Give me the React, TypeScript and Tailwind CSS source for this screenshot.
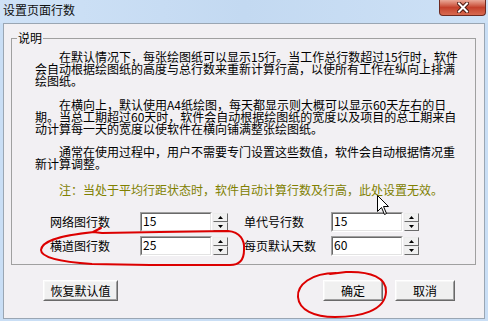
import React from "react";

const FACE = "bg-[#f2f0f3]";

function Spin() {
  return (
    <div className="ml-[1px] flex h-[18px] w-[15px] flex-col">
      <div className="flex h-[9px] items-center justify-center border border-t-[#ececec] border-l-[#ececec] border-b-[#6a6a6a] border-r-[#6a6a6a] bg-[#f0f0f0]">
        <svg width="5" height="3" viewBox="0 0 5 3">
          <path d="M2.5 0 L5 3 L0 3 Z" fill="#000" />
        </svg>
      </div>
      <div className="flex h-[9px] items-center justify-center border border-t-[#ececec] border-l-[#ececec] border-b-[#6a6a6a] border-r-[#6a6a6a] bg-[#f0f0f0]">
        <svg width="5" height="3" viewBox="0 0 5 3">
          <path d="M0 0 L5 0 L2.5 3 Z" fill="#000" />
        </svg>
      </div>
    </div>
  );
}

function Field({ value }: { value: string }) {
  return (
    <div className="flex items-center">
      <div className="h-[20px] w-[72px] border border-t-[#a0a0a0] border-l-[#a0a0a0] border-b-white border-r-white">
        <div className="h-full w-full border border-t-[#696969] border-l-[#696969] border-b-[#e3e3e3] border-r-[#e3e3e3] bg-white pl-[1px] text-[12px] leading-[14px]">
          {value}
        </div>
      </div>
      <Spin />
    </div>
  );
}

function Btn({ label, w }: { label: string; w: string }) {
  return (
    <div className={`h-[21px] ${w} border border-t-white border-l-white border-b-[#696969] border-r-[#696969]`}>
      <div className="flex h-full w-full items-center justify-center border border-t-[#f7f7f7] border-l-[#f7f7f7] border-b-[#a0a0a0] border-r-[#a0a0a0] bg-[#f0f0f0] text-[12px] leading-[12px]">
        {label}
      </div>
    </div>
  );
}

export default function App() {
  return (
    <div className="relative h-[321px] w-[488px] overflow-hidden bg-[#c9def5] font-['Noto_Sans_CJK_SC',sans-serif] text-[12px] leading-[12px] text-black">
      {/* title bar */}
      <div className="flex h-[23px] items-start justify-between bg-gradient-to-r from-[#cfe2f7] via-[#c3d9f1] to-[#cde1f6]">
        <span className="pl-[3px] pt-[4px] text-[12px] leading-[12px] text-[#101010]">设置页面行数</span>
        <div className="mr-[2px] flex h-[16px] w-[47px] items-center justify-center rounded-b-[4px] border border-t-0 border-[#6e2a20] bg-gradient-to-b from-[#e9a898] via-[#c4412c] to-[#d86a50]">
          <svg width="12" height="11" viewBox="0 0 12 11">
            <path d="M2 1.5 L10 9.5 M10 1.5 L2 9.5" stroke="#4a1810" strokeWidth="4" strokeLinecap="square" />
            <path d="M2 1.5 L10 9.5 M10 1.5 L2 9.5" stroke="#ffffff" strokeWidth="2" strokeLinecap="square" />
          </svg>
        </div>
      </div>

      {/* client area */}
      <div className={`mx-[3px] h-[296px] border border-[#9aa6b3] ${FACE}`}>
        {/* group box */}
        <div className="relative ml-[7px] mt-[14px] h-[227px] w-[465px] border border-[#a0a0a0]">
          <span className={`absolute left-[5px] top-[-7px] px-[1px] leading-[12px] ${FACE}`}>说明</span>

          <div className="pl-[23px] pt-[12px] whitespace-nowrap leading-[12px]">
            <div>
              <div className="pl-[24px]">在默认情况下，每张绘图纸可以显示15行。当工作总行数超过15行时，软件</div>
              <div>会自动根据绘图纸的高度与总行数来重新计算行高，以使所有工作在纵向上排满</div>
              <div>绘图纸。</div>
            </div>
            <div className="mt-[12px]">
              <div className="pl-[24px]">在横向上，默认使用A4纸绘图，每天都显示则大概可以显示60天左右的日</div>
              <div>期。当总工期超过60天时，软件会自动根据绘图纸的宽度以及项目的总工期来自</div>
              <div>动计算每一天的宽度以使软件在横向铺满整张绘图纸。</div>
            </div>
            <div className="mt-[11px]">
              <div className="pl-[24px]">通常在使用过程中，用户不需要专门设置这些数值，软件会自动根据情况重</div>
              <div>新计算调整。</div>
            </div>
            <div className="mt-[14px] pl-[24px] text-[#808000]">注：当处于平均行距状态时，软件自动计算行数及行高，此处设置无效。</div>
          </div>

          <div className="mt-[16px] flex flex-col gap-[4px] pl-[38px]">
            <div className="flex items-center">
              <span className="w-[90px]">网络图行数</span>
              <Field value="15" />
              <span className="ml-[16px] w-[87px]">单代号行数</span>
              <Field value="15" />
            </div>
            <div className="flex items-center">
              <span className="w-[90px]">横道图行数</span>
              <Field value="25" />
              <span className="ml-[16px] w-[87px]">每页默认天数</span>
              <Field value="60" />
            </div>
          </div>
        </div>

        {/* buttons */}
        <div className="mt-[15px] flex">
          <div className="ml-[39px]">
            <Btn label="恢复默认值" w="w-[75px]" />
          </div>
          <div className="ml-[205px]">
            <Btn label="确定" w="w-[60px]" />
          </div>
          <div className="ml-[12px]">
            <Btn label="取消" w="w-[60px]" />
          </div>
        </div>
      </div>

      {/* annotations + cursor overlay */}
      <svg
        className="pointer-events-none absolute left-0 top-0"
        width="488"
        height="321"
        viewBox="0 0 488 321"
      >
        <path
          d="M101 228 L93 232 L102 233 L160 232 L228 231 C240 232 245 240 244 250 C244 260 240 265 230 265 L150 265 L92 264 C62 262 41 258 41 250 C42 242 55 236 94 232"
          fill="none"
          stroke="#dc0000"
          strokeWidth="2"
          strokeLinejoin="round"
          strokeLinecap="round"
        />
        <path
          d="M336 273 C311 273 297 285 298 297 C299 310 314 317 335 317 C360 317 385 311 386 292 C387 278 371 271 346 272 L330 274"
          fill="none"
          stroke="#dc0000"
          strokeWidth="2"
          strokeLinejoin="round"
          strokeLinecap="round"
        />
        <path
          d="M377.5 195.5 L377.5 211.5 L381.5 207.5 L384.5 214.5 L386.5 213.5 L383.5 206.5 L388.5 206.5 Z"
          fill="#ffffff"
          stroke="#000000"
          strokeWidth="1"
          strokeLinejoin="miter"
        />
      </svg>
    </div>
  );
}
